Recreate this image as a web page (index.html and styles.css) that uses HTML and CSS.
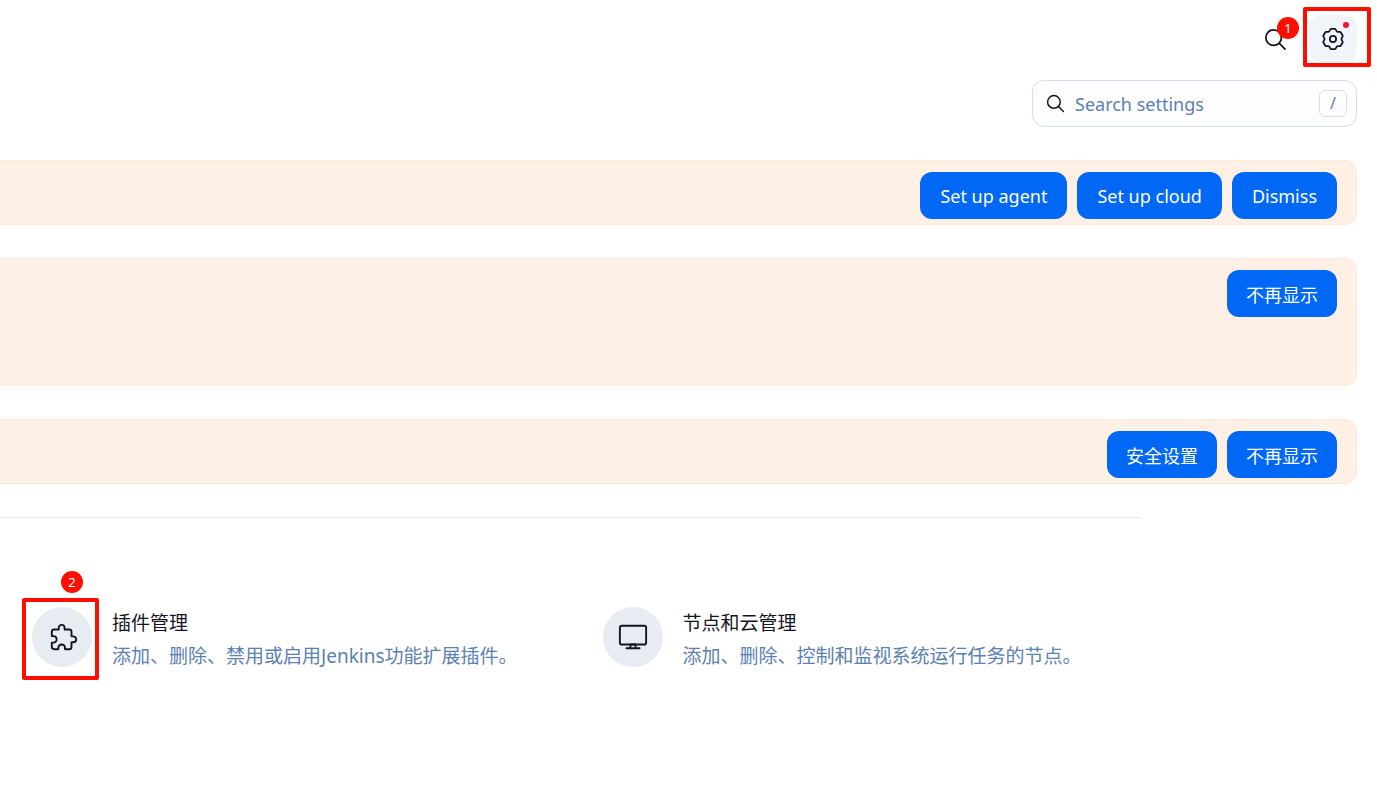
FILE: index.html
```html
<!DOCTYPE html>
<html lang="zh-CN">
<head>
    <meta charset="UTF-8">
    <meta name="viewport" content="width=device-width, initial-scale=1.0">
    <title>Jenkins</title>
    <link rel="stylesheet" href="styles.css">
</head>
<body>
    <header class="header">
        <button class="header-btn" type="button" aria-label="Search">
            <svg class="icon-search" viewBox="0 0 24 24"><circle cx="10.5" cy="10.5" r="8.5"/><path d="M16.7 16.7L23 23"/></svg>
            <span class="step step-one">1</span>
        </button>
        <button class="header-btn active" type="button" aria-label="Settings">
            <svg class="icon-gear" viewBox="-12 -12 24 24">
                <path d="M-4.6 -7.97C-3 -8.9 -3.4 -11 -2.2 -11L2.2 -11C3.4 -11 3 -8.9 4.6 -7.97C6.2 -7.05 7.83 -8.44 8.43 -7.41L10.63 -3.59C11.23 -2.56 9.2 -1.85 9.2 0C9.2 1.85 11.23 2.56 10.63 3.59L8.43 7.41C7.83 8.44 6.2 7.05 4.6 7.97C3 8.9 3.4 11 2.2 11L-2.2 11C-3.4 11 -3 8.9 -4.6 7.97C-6.2 7.05 -7.83 8.44 -8.43 7.41L-10.63 3.59C-11.23 2.56 -9.2 1.85 -9.2 0C-9.2 -1.85 -11.23 -2.56 -10.63 -3.59L-8.43 -7.41C-7.83 -8.44 -6.2 -7.05 -4.6 -7.97Z"/>
                <circle r="3.4"/>
            </svg>
            <span class="dot"></span>
            <span class="frame frame-gear"></span>
        </button>
    </header>

    <main>
        <div class="search-row">
            <label class="search-box">
                <svg class="icon-find" viewBox="0 0 24 24"><circle cx="10" cy="10" r="8"/><path d="M15.8 15.8L22 22"/></svg>
                <input type="search" placeholder="Search settings" aria-label="Search settings">
                <kbd>/</kbd>
            </label>
        </div>

        <section class="alert" lang="en">
            <button class="btn" type="button">Set up agent</button>
            <button class="btn" type="button">Set up cloud</button>
            <button class="btn" type="button">Dismiss</button>
        </section>
        <section class="alert alert-tall">
            <button class="btn" type="button">不再显示</button>
        </section>
        <section class="alert">
            <button class="btn" type="button">安全设置</button>
            <button class="btn" type="button">不再显示</button>
        </section>

        <div class="settings">
            <a class="item" href="#plugins">
                <span class="item-icon">
                    <svg class="icon-puzzle" viewBox="16 0 480 512"><path d="M413.66 246.1H386a2 2 0 01-2-2v-77.24A38.86 38.86 0 00345.14 128H267.9a2 2 0 01-2-2V98.34c0-27.14-21.5-49.86-48.64-50.33a49.53 49.53 0 00-50.4 49.51V126a2 2 0 01-2 2H87.62A39.74 39.74 0 0048 167.62V238a2 2 0 002 2h26.91c29.37 0 53.68 25.48 54.09 54.85.42 29.87-23.51 57.15-53.29 57.15H50a2 2 0 00-2 2v70.38A39.74 39.74 0 0087.62 464H158a2 2 0 002-2v-20.93c0-30.28 24.75-56.35 55-57.06 30.1-.7 57 20.31 57 50.28V462a2 2 0 002 2h71.14A38.86 38.86 0 00384 425.14v-78a2 2 0 012-2h28.48c27.63 0 49.52-22.67 49.52-50.4s-23.2-48.64-50.34-48.64z"/></svg>
                    <span class="step step-two">2</span>
                    <span class="frame frame-plugin"></span>
                </span>
                <span class="item-text">
                    <span class="item-title">插件管理</span>
                    <span class="item-desc">添加、删除、禁用或启用Jenkins功能扩展插件。</span>
                </span>
            </a>
            <a class="item" href="#nodes">
                <span class="item-icon">
                    <svg class="icon-desktop" viewBox="0 0 512 512"><rect x="32" y="64" width="448" height="320" rx="32"/><path d="M304 448l-8-64h-80l-8 64zM368 448H144"/></svg>
                </span>
                <span class="item-text">
                    <span class="item-title">节点和云管理</span>
                    <span class="item-desc">添加、删除、控制和监视系统运行任务的节点。</span>
                </span>
            </a>
        </div>
    </main>
</body>
</html>
```
FILE: styles.css
```css
* {
    box-sizing: border-box;
}
body {
    min-height: 100vh;
    margin: 0;
    background-color: #fff;
    color: #14141f;
    font-family: "Noto Sans", "Noto Sans CJK SC", sans-serif;
    font-size: 18px;
}
button, input, kbd {
    font: inherit;
}
svg {
    fill: none;
    stroke: #14141f;
    stroke-width: 1.9;
    stroke-linecap: round;
    stroke-linejoin: round;
}

.header {
    display: flex;
    justify-content: flex-end;
    gap: 10px;
    padding: 15px 20px 0 0;
}
.header-btn {
    position: relative;
    display: flex;
    align-items: center;
    justify-content: center;
    width: 48px;
    height: 47px;
    padding: 0;
    border: none;
    border-radius: 12px;
    background-color: transparent;
    cursor: pointer;
}
.header-btn.active {
    background-color: #f1f4f8;
}
.icon-search, .icon-gear {
    width: 22px;
    height: 22px;
}
.icon-gear {
    overflow: visible;
}
.dot {
    position: absolute;
    top: 7px;
    right: 8px;
    width: 6px;
    height: 6px;
    border-radius: 50%;
    background-color: #f5142a;
}

/* numbered steps and frames over the page */
.step {
    position: absolute;
    width: 22px;
    height: 22px;
    border-radius: 50%;
    background-color: #ff0e00;
    color: #fff;
    font-size: 13px;
    line-height: 22px;
    text-align: center;
}
.step-one {
    top: 2px;
    right: 0;
}
.step-two {
    top: -36px;
    left: 29px;
}
.frame {
    position: absolute;
    border: 4px solid #ff0e00;
    border-radius: 2px;
}
.frame-gear {
    inset: -8px -14px -5px -6px;
}
.frame-plugin {
    inset: -9px -7px -13px -10px;
}

.search-row {
    display: flex;
    justify-content: flex-end;
    padding: 18px 20px 0 0;
    margin-bottom: 33px;
}
.search-box {
    display: flex;
    align-items: center;
    gap: 10px;
    width: 325px;
    height: 47px;
    padding: 0 9px 0 13px;
    border: 1px solid #d5dcec;
    border-radius: 12px;
    background-color: #fdfdfe;
}
.icon-find {
    width: 19px;
    height: 19px;
}
.search-box input {
    flex: 1;
    min-width: 0;
    padding: 0;
    border: none;
    outline: none;
    background: none;
}
.search-box input::placeholder {
    color: #5b80b2;
    opacity: 1;
}
.search-box kbd {
    width: 28px;
    height: 27px;
    border: 1px solid #d5dcec;
    border-radius: 6px;
    color: #5b80b2;
    font-size: 16px;
    line-height: 24px;
    text-align: center;
}

.alert {
    display: flex;
    align-items: flex-start;
    justify-content: flex-end;
    gap: 10px;
    min-height: 65px;
    margin: 0 20px 33px 0;
    padding: 11px 19px 5px;
    border: 1px solid #ffe8da;
    border-left: none;
    border-radius: 0 12px 12px 0;
    background-color: #fff0e6;
}
.alert-tall {
    min-height: 128px;
}
.btn {
    height: 47px;
    padding: 0 19px;
    border: none;
    border-radius: 12px;
    background-color: #0068f5;
    color: #fff;
    cursor: pointer;
}
.btn:lang(en) {
    padding: 0 20px;
}

.settings {
    display: grid;
    grid-template-columns: 1fr 1fr;
    margin-right: 236px;
    padding: 89px 0 32px;
    border-top: 1px solid #e6eaf1;
}
.item {
    display: flex;
    gap: 20px;
    padding-left: 32px;
    color: inherit;
    text-decoration: none;
}
.item-icon {
    position: relative;
    display: flex;
    align-items: center;
    justify-content: center;
    flex-shrink: 0;
    width: 60px;
    height: 60px;
    border-radius: 50%;
    background-color: #e7ecf3;
}
.icon-puzzle, .icon-desktop {
    width: 30px;
    height: 30px;
    stroke-width: 32;
}
.icon-puzzle {
    margin-left: 3px;
}
.item-text {
    display: flex;
    flex-direction: column;
    font-size: 19px;
    line-height: 33px;
    white-space: nowrap;
}
.item-desc {
    color: #5b80b2;
}
```
